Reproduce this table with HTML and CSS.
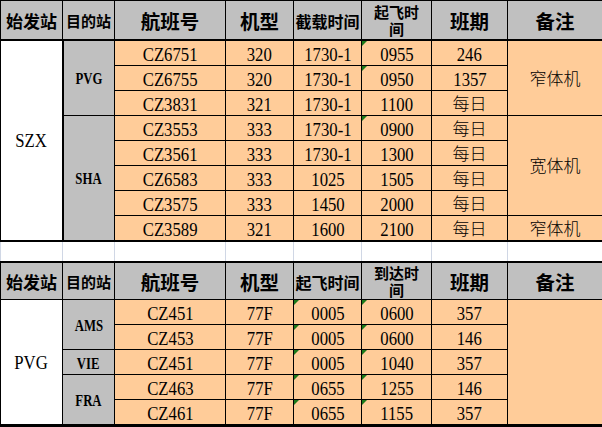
FILE: index.html
```html
<!DOCTYPE html>
<html lang="zh-CN">
<head>
<meta charset="utf-8">
<title>航班时刻表</title>
<link rel="stylesheet" href="styles.css">
</head>
<body>
<table class="sheet">
  <colgroup>
    <col class="c1"><col class="c2"><col class="c3"><col class="c4"><col class="c5"><col class="c6"><col class="c7"><col class="c8">
  </colgroup>
  <tr class="hdr hdr1">
    <th class="first hs">始发站</th>
    <th class="hd">目的站</th>
    <th class="hm">航班号</th>
    <th class="hm">机型</th>
    <th class="hn">截载时间</th>
    <th class="hw">起飞时<br>间</th>
    <th class="hm">班期</th>
    <th class="hm">备注</th>
  </tr>
  <tr class="row">
    <td class="first orig orig1" rowspan="8"><span class="l">SZX</span></td>
    <td class="dest" rowspan="3"><span class="d">PVG</span></td>
    <td><span class="l">CZ6751</span></td>
    <td><span class="l">320</span></td>
    <td><span class="l">1730-1</span></td>
    <td class="tri"><span class="l">0955</span></td>
    <td><span class="l">246</span></td>
    <td class="cj" rowspan="3">窄体机</td>
  </tr>
  <tr class="row">
    <td><span class="l">CZ6755</span></td>
    <td><span class="l">320</span></td>
    <td><span class="l">1730-1</span></td>
    <td class="tri"><span class="l">0950</span></td>
    <td><span class="l">1357</span></td>
  </tr>
  <tr class="row">
    <td><span class="l">CZ3831</span></td>
    <td><span class="l">321</span></td>
    <td><span class="l">1730-1</span></td>
    <td><span class="l">1100</span></td>
    <td class="cj">每日</td>
  </tr>
  <tr class="row">
    <td class="dest" rowspan="5"><span class="d">SHA</span></td>
    <td><span class="l">CZ3553</span></td>
    <td><span class="l">333</span></td>
    <td><span class="l">1730-1</span></td>
    <td class="tri"><span class="l">0900</span></td>
    <td class="cj">每日</td>
    <td class="cj" rowspan="4">宽体机</td>
  </tr>
  <tr class="row">
    <td><span class="l">CZ3561</span></td>
    <td><span class="l">333</span></td>
    <td><span class="l">1730-1</span></td>
    <td><span class="l">1300</span></td>
    <td class="cj">每日</td>
  </tr>
  <tr class="row">
    <td><span class="l">CZ6583</span></td>
    <td><span class="l">333</span></td>
    <td><span class="l">1025</span></td>
    <td><span class="l">1505</span></td>
    <td class="cj">每日</td>
  </tr>
  <tr class="row">
    <td><span class="l">CZ3575</span></td>
    <td><span class="l">333</span></td>
    <td><span class="l">1450</span></td>
    <td><span class="l">2000</span></td>
    <td class="cj">每日</td>
  </tr>
  <tr class="row">
    <td><span class="l">CZ3589</span></td>
    <td><span class="l">321</span></td>
    <td><span class="l">1600</span></td>
    <td><span class="l">2100</span></td>
    <td class="cj">每日</td>
    <td class="cj">窄体机</td>
  </tr>
  <tr class="gap">
    <td class="first g"></td><td class="g"></td><td class="g"></td><td class="g"></td><td class="g"></td><td class="g"></td><td class="g"></td><td class="g"></td>
  </tr>
  <tr class="hdr hdr2">
    <th class="first hs">始发站</th>
    <th class="hd">目的站</th>
    <th class="hm">航班号</th>
    <th class="hm">机型</th>
    <th class="hn">起飞时间</th>
    <th class="hw hw2">到达时<br>间</th>
    <th class="hm">班期</th>
    <th class="hm">备注</th>
  </tr>
  <tr class="row">
    <td class="first orig bot" rowspan="5"><span class="l">PVG</span></td>
    <td class="dest" rowspan="2"><span class="d">AMS</span></td>
    <td><span class="l">CZ451</span></td>
    <td><span class="l">77F</span></td>
    <td class="tri"><span class="l">0005</span></td>
    <td class="tri"><span class="l">0600</span></td>
    <td><span class="l">357</span></td>
    <td class="note2 bot" rowspan="5"></td>
  </tr>
  <tr class="row">
    <td><span class="l">CZ453</span></td>
    <td><span class="l">77F</span></td>
    <td class="tri"><span class="l">0005</span></td>
    <td class="tri"><span class="l">0600</span></td>
    <td><span class="l">146</span></td>
  </tr>
  <tr class="row">
    <td class="dest"><span class="d">VIE</span></td>
    <td><span class="l">CZ451</span></td>
    <td><span class="l">77F</span></td>
    <td class="tri"><span class="l">0005</span></td>
    <td class="tri"><span class="l">1040</span></td>
    <td><span class="l">357</span></td>
  </tr>
  <tr class="row">
    <td class="dest bot" rowspan="2"><span class="d">FRA</span></td>
    <td><span class="l">CZ463</span></td>
    <td><span class="l">77F</span></td>
    <td class="tri"><span class="l">0655</span></td>
    <td class="tri"><span class="l">1255</span></td>
    <td><span class="l">146</span></td>
  </tr>
  <tr class="row lastrow">
    <td class="bot"><span class="l">CZ461</span></td>
    <td class="bot"><span class="l">77F</span></td>
    <td class="tri bot"><span class="l">0655</span></td>
    <td class="tri bot"><span class="l">1155</span></td>
    <td class="bot"><span class="l">357</span></td>
  </tr>
</table>
</body>
</html>
```
FILE: styles.css
```css
html, body {
  margin: 0;
  padding: 0;
  background: #ffffff;
}

.sheet {
  border-collapse: collapse;
  table-layout: fixed;
  width: 602px;
  color: #000;
}

.c1 { width: 62px; }
.c2 { width: 52px; }
.c3 { width: 111px; }
.c4 { width: 68px; }
.c5 { width: 68px; }
.c6 { width: 70px; }
.c7 { width: 76px; }
.c8 { width: 95px; }

.sheet th,
.sheet td {
  border: 1px solid #000;
  padding: 0;
  text-align: center;
  vertical-align: middle;
  white-space: nowrap;
}

.sheet td {
  background: #ffcc99;
  position: relative;
  padding-top: 4px;
}

.sheet th {
  background: #c0c0c0;
  font-family: "Noto Sans CJK SC", sans-serif;
  font-weight: 700;
  padding-top: 3px;
  line-height: 24px;
}

.hdr1 { height: 39px; }
.hdr1 th { border-bottom: 2px solid #000; }
.hdr2 { height: 38px; }
.hdr2 th { border-top: 2px solid #000; }
.row { height: 25px; }
.gap { height: 21px; }

.hs { font-size: 17px; }
.hd { font-size: 15px; }
.hm { font-size: 19.5px; }
.hn { font-size: 16px; }
.sheet th.hw { font-size: 15px; line-height: 17px; padding-top: 0; }
.sheet th.hw2 { line-height: 17px; padding-top: 1px; }

.first { border-left: 1px solid #d0d7e5; }

.sheet td.orig { background: #ffffff; padding-top: 2px; }
.sheet td.orig1 { border-right: 2px solid #000; }
.sheet td.dest { background: #c0c0c0; padding-top: 2px; }

.sheet td.g {
  background: #ffffff;
  padding: 0;
  border-top: 2px solid #000;
  border-bottom: 2px solid #000;
  border-left: 1px solid #d0d7e5;
  border-right: 1px solid #d0d7e5;
}

.sheet td.note2 { border-right: none; }
.sheet td.bot { border-bottom: 3px solid #000; }

.l {
  display: inline-block;
  font-family: "Liberation Serif", "Times New Roman", serif;
  font-size: 19px;
  line-height: 19px;
  transform: scaleX(0.88);
}

.d {
  display: inline-block;
  font-family: "Liberation Serif", "Times New Roman", serif;
  font-weight: 700;
  font-size: 17px;
  line-height: 19px;
  transform: scaleX(0.75);
}

.sheet td.cj {
  font-family: "Noto Sans CJK SC", sans-serif;
  font-weight: 300;
  font-size: 17px;
  line-height: 22px;
  padding-top: 0;
}

.tri::before {
  content: "";
  position: absolute;
  top: 0;
  left: 0;
  width: 0;
  height: 0;
  border-top: 5px solid #1b7a1b;
  border-right: 5px solid transparent;
}
```
